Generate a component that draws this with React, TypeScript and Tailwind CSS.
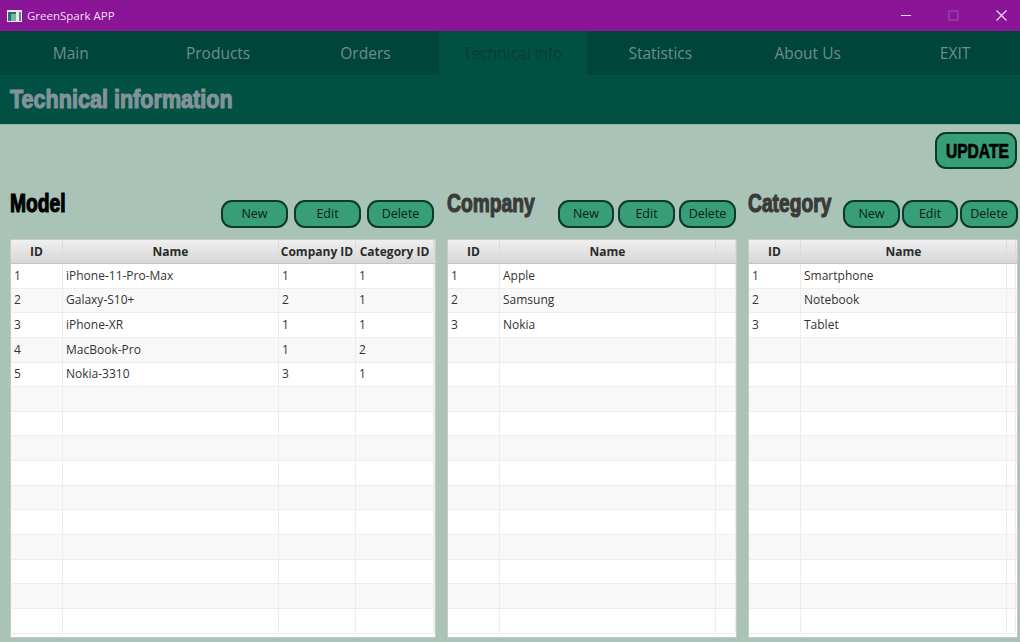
const TABS = ['Main', 'Products', 'Orders', 'Technical info', 'Statistics', 'About Us', 'EXIT']

const MODELS = [
  ['1', 'iPhone-11-Pro-Max', '1', '1'],
  ['2', 'Galaxy-S10+', '2', '1'],
  ['3', 'iPhone-XR', '1', '1'],
  ['4', 'MacBook-Pro', '1', '2'],
  ['5', 'Nokia-3310', '3', '1'],
]
const COMPANIES = [
  ['1', 'Apple'],
  ['2', 'Samsung'],
  ['3', 'Nokia'],
]
const CATEGORIES = [
  ['1', 'Smartphone'],
  ['2', 'Notebook'],
  ['3', 'Tablet'],
]

const IMPACT =
  "inline-block origin-left font-['Liberation_Sans',sans-serif] font-bold whitespace-nowrap [-webkit-text-stroke:1.2px_currentColor]"

function ActionButton({ label, className }: { label: string; className: string }) {
  return (
    <button className={`h-[28px] rounded-[11px] border-2 border-[#0b3a2e] bg-[#379e78] text-[12.5px] text-[#0c211a] ${className}`}>
      {label}
    </button>
  )
}

function DataTable({ headers, rows, cols, className }: { headers: string[]; rows: string[][]; cols: string; className: string }) {
  // 15 visible rows, short tables just show empty striped ones
  const filled = Array.from({ length: 15 }, (_, i) => rows[i] ?? headers.map(() => ''))

  return (
    <div className={`h-[399px] overflow-hidden border border-[#c8c8c8] bg-white ${className}`}>
      <div className={`grid h-[24px] border-b border-[#c4c4c4] bg-gradient-to-b from-[#f0f0f0] to-[#d6d6d6] ${cols}`}>
        {headers.map((h) => (
          <div key={h} className="flex items-center justify-center whitespace-nowrap border-r border-[#dcdcdc] text-[12px] font-bold text-[#2b2b2b]">
            {h}
          </div>
        ))}
        <div className="border-r border-[#dcdcdc]" />
      </div>
      {filled.map((row, i) => (
        <div key={i} className={`grid h-[24.65px] border-b border-[#ededed] ${cols} ${i % 2 ? 'bg-[#f8f8f8]' : 'bg-white'}`}>
          {row.map((cell, j) => (
            <div key={j} className="flex items-center border-r border-[#ededed] pl-[3px] text-[12px] text-[#333]">
              {cell}
            </div>
          ))}
          <div className="border-r border-[#ededed]" />
        </div>
      ))}
    </div>
  )
}

export default function App() {
  return (
    <div className="flex h-[642px] w-[1020px] flex-col overflow-hidden bg-[#a9c3b7] font-['Open_Sans',sans-serif]">
      {/* Window title bar */}
      <div className="flex h-[31px] items-center bg-[#8a1596] pl-[7px] text-[11.5px] text-[#f3dff5]">
        <svg width="15" height="12" viewBox="0 0 15 12" className="mr-[5px]">
          <rect width="15" height="12" fill="#e8e8e8" />
          <rect x="1" y="2" width="8" height="9" fill="#2f6f6a" />
          <rect x="4" y="4" width="5" height="7" fill="#7fb0a8" />
          <rect x="12" y="2" width="2" height="9" fill="#5b7fa0" />
        </svg>
        <span className="pt-[1px]">GreenSpark APP</span>
        <div className="ml-auto flex items-center">
          <svg width="48" height="31" viewBox="0 0 48 31">
            <path d="M20 15.5h10" stroke="#f3dff5" strokeWidth="1" />
          </svg>
          <svg width="48" height="31" viewBox="0 0 48 31">
            <rect x="20" y="11" width="9" height="9" fill="none" stroke="#a552b0" strokeWidth="1" />
          </svg>
          <svg width="48" height="31" viewBox="0 0 48 31" className="mr-[-5px]">
            <path d="M19.5 10.5l10 10M29.5 10.5l-10 10" stroke="#f3dff5" strokeWidth="1.1" />
          </svg>
        </div>
      </div>

      {/* Tabs */}
      <div className="ml-[-3px] grid h-[44px] grid-cols-[repeat(7,147.4px)] bg-[#00443a] text-[15.5px] text-[#6d8f8a]">
        {TABS.map((tab) => (
          <div key={tab} className={`flex items-center justify-center pt-[1px] ${tab === 'Technical info' ? 'bg-[#005142] text-[#0b3d33]' : ''}`}>
            {tab}
          </div>
        ))}
      </div>

      <div className="flex h-[50px] items-center border-b border-[#8fb0a3] bg-[#005142] pl-[10px]">
        <h1 className={`${IMPACT} scale-x-[0.83] text-[26px] text-[#82939a]`}>Technical information</h1>
      </div>

      {/* Update */}
      <div className="flex justify-end pr-[3px] pt-[7px]">
        <button className="h-[37px] w-[82px] rounded-[11px] border-2 border-[#0b3a2e] bg-[#379e78] text-[20px] text-black">
          <span className="inline-block scale-x-[0.78] font-['Liberation_Sans',sans-serif] font-bold [-webkit-text-stroke:0.7px_black]">UPDATE</span>
        </button>
      </div>

      {/* Panels */}
      <div className="mt-[31px] flex pl-[10px]">
        <section className="w-[426px]">
          <div className="flex h-[39px] items-start">
            <h2 className={`${IMPACT} -mt-[11px] w-[211px] scale-x-[0.74] text-[26px] leading-[28px] text-black`}>Model</h2>
            <div className="flex gap-[6px]">
              <ActionButton label="New" className="w-[67px]" />
              <ActionButton label="Edit" className="w-[67px]" />
              <ActionButton label="Delete" className="w-[67px]" />
            </div>
          </div>
          <DataTable
            headers={['ID', 'Name', 'Company ID', 'Category ID']}
            rows={MODELS}
            cols="grid-cols-[52px_216px_77px_78px_1fr]"
            className="w-[426px]"
          />
        </section>

        <section className="ml-[11px] w-[290px]">
          <div className="flex h-[39px] items-start">
            <h2 className={`${IMPACT} -mt-[11px] w-[111px] scale-x-[0.74] text-[26px] leading-[28px] text-[#3a3a3a]`}>Company</h2>
            <div className="flex gap-[4px]">
              <ActionButton label="New" className="w-[56px]" />
              <ActionButton label="Edit" className="w-[57px]" />
              <ActionButton label="Delete" className="w-[57px]" />
            </div>
          </div>
          <DataTable
            headers={['ID', 'Name']}
            rows={COMPANIES}
            cols="grid-cols-[52px_216px_20px_1fr]"
            className="w-[290px]"
          />
        </section>

        <section className="ml-[11px] w-[270px]">
          <div className="flex h-[39px] items-start">
            <h2 className={`${IMPACT} -mt-[11px] w-[95px] scale-x-[0.74] text-[26px] leading-[28px] text-[#3a3a3a]`}>Category</h2>
            <div className="flex gap-[2px]">
              <ActionButton label="New" className="w-[57px]" />
              <ActionButton label="Edit" className="w-[56px]" />
              <ActionButton label="Delete" className="w-[58px]" />
            </div>
          </div>
          <DataTable
            headers={['ID', 'Name']}
            rows={CATEGORIES}
            cols="grid-cols-[52px_206px_9px_1fr]"
            className="w-[270px]"
          />
        </section>
      </div>
    </div>
  )
}
